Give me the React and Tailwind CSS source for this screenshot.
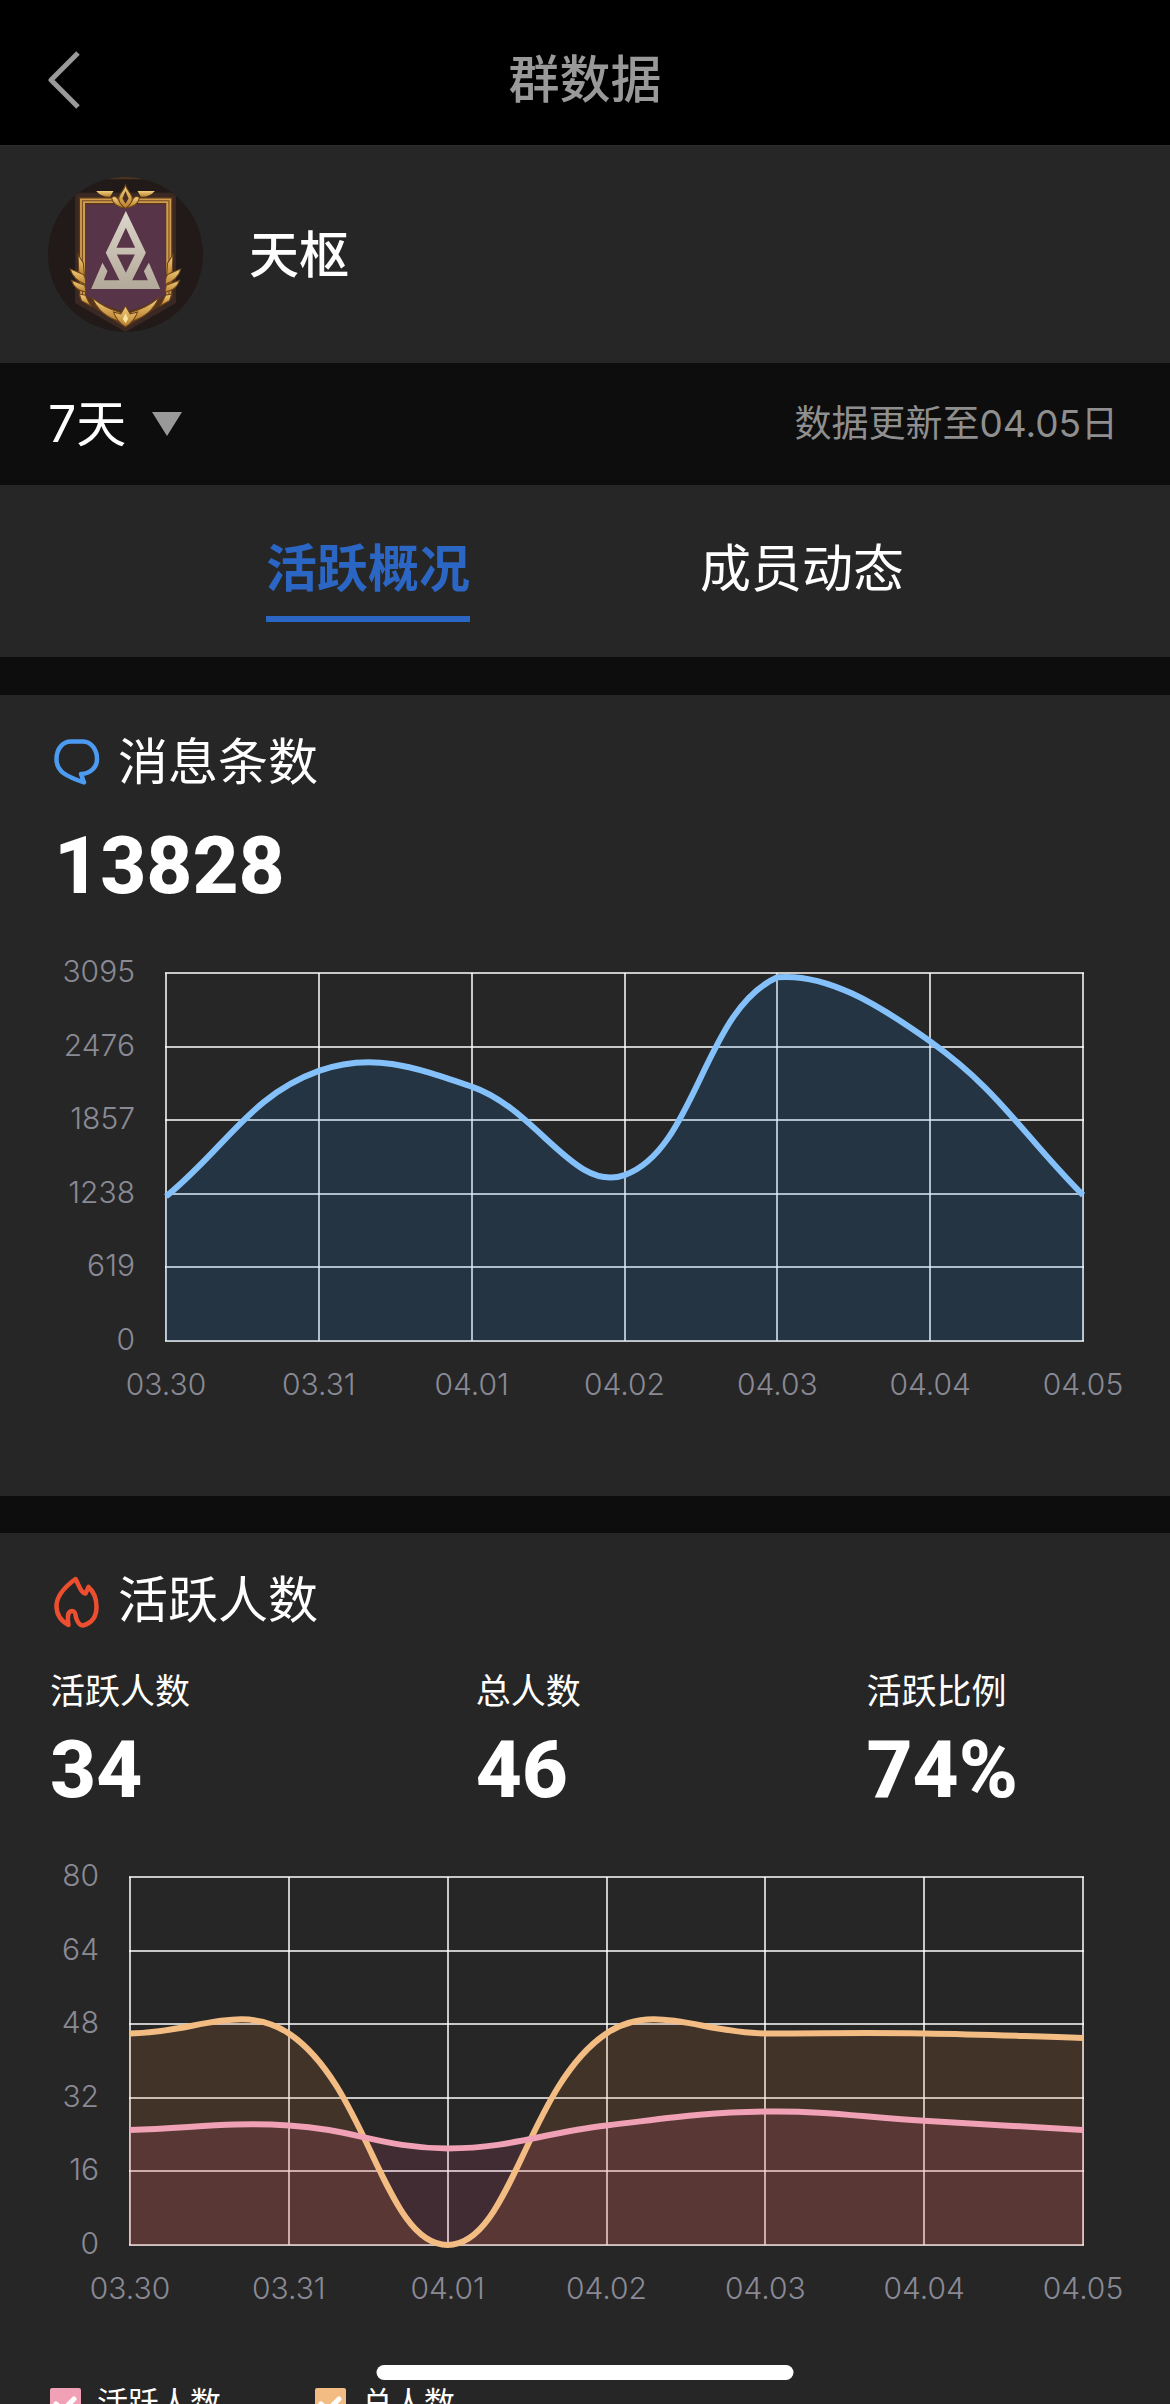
import React, { useState } from "react";

const DATES = ["03.30", "03.31", "04.01", "04.02", "04.03", "04.04", "04.05"];

const messageSeries = [
  {
    name: "消息条数",
    data: [1215, 2272, 2140, 1395, 3059, 2520, 1227],
    stroke: "#84c1fb",
    fill: "rgba(31,131,231,0.15)",
  },
];

const memberSeries = [
  {
    name: "总人数",
    data: [46, 46, 0, 46, 46, 46, 45],
    stroke: "#f3bc82",
    fill: "rgba(231,125,51,0.15)",
  },
  {
    name: "活跃人数",
    data: [25, 26, 21, 26, 29, 27, 25],
    stroke: "#f0a1b5",
    fill: "rgba(218,78,118,0.15)",
  },
];

const TENSION = 0.4;

// smooth curve through the points, control points stay inside the plot area
const splinePath = (points, top, bottom) => {
  const clamp = (y) => Math.min(bottom, Math.max(top, y));
  const dist = (a, b) => Math.hypot(b.x - a.x, b.y - a.y);

  const controls = points.map((cur, i) => {
    const prev = points[i - 1] || cur;
    const next = points[i + 1] || cur;
    const d01 = dist(prev, cur);
    const d12 = dist(cur, next);
    const fa = (TENSION * d01) / (d01 + d12);
    const fb = (TENSION * d12) / (d01 + d12);
    return {
      inX: cur.x - fa * (next.x - prev.x),
      inY: clamp(cur.y - fa * (next.y - prev.y)),
      outX: cur.x + fb * (next.x - prev.x),
      outY: clamp(cur.y + fb * (next.y - prev.y)),
    };
  });

  return points.reduce((path, p, i) => {
    if (i === 0) return `M${p.x} ${p.y}`;
    const a = controls[i - 1];
    const b = controls[i];
    return `${path}C${a.outX} ${a.outY} ${b.inX} ${b.inY} ${p.x} ${p.y}`;
  }, "");
};

const LineChart = ({ label, left, max, series }) => {
  const right = 1083;
  const top = 24;
  const bottom = 392;
  const stepX = (right - left) / (DATES.length - 1);
  const stepY = (bottom - top) / 5;
  const xs = DATES.map((_, i) => left + stepX * i);
  const rows = [0, 1, 2, 3, 4, 5];

  const lines = series.map((s) => ({
    ...s,
    path: splinePath(
      s.data.map((v, i) => ({
        x: xs[i],
        y: bottom - (v / max) * (bottom - top),
      })),
      top,
      bottom
    ),
  }));

  return (
    <svg viewBox="0 0 1170 460" className="block w-full" role="img" aria-label={label}>
      <g stroke="#ffffff" strokeOpacity="0.75" strokeWidth="2">
        {rows.map((r) => (
          <line key={r} x1={left - 1} x2={right + 1} y1={Math.round(top + stepY * r)} y2={Math.round(top + stepY * r)} />
        ))}
        {xs.map((x) => (
          <line key={x} x1={Math.round(x)} x2={Math.round(x)} y1={top} y2={bottom} />
        ))}
      </g>
      {lines.map((s) => (
        <path key={s.name} d={`${s.path}L${right} ${bottom}L${left} ${bottom}Z`} fill={s.fill} />
      ))}
      {lines.map((s) => (
        <path key={s.name} d={s.path} fill="none" stroke={s.stroke} strokeWidth="6" />
      ))}
      <g fill="#8a8a95" fontSize="30" fontWeight="300">
        {rows.map((r) => (
          <text key={r} x={left - 31} y={top + stepY * r + 9} textAnchor="end">
            {max - (max / 5) * r}
          </text>
        ))}
        {DATES.map((d, i) => (
          <text key={d} x={xs[i]} y={bottom + 54} textAnchor="middle">
            {d}
          </text>
        ))}
      </g>
    </svg>
  );
};

const GroupAvatar = () => (
  <svg viewBox="54 48 464 464" className="size-[155px] shrink-0 rounded-full" role="img" aria-label="群头像">
    <defs>
      <linearGradient id="gold" x1="0" y1="0" x2="0" y2="1">
        <stop offset="0" stopColor="#f3cf7c" />
        <stop offset="1" stopColor="#b97f2e" />
      </linearGradient>
      <linearGradient id="silver" x1="0" y1="0" x2="0" y2="1">
        <stop offset="0" stopColor="#ddd6cb" />
        <stop offset="1" stopColor="#b3a99a" />
      </linearGradient>
    </defs>
    <rect x="54" y="48" width="464" height="464" fill="#221a19" />
    <path d="M215 48H360V55H215Z" fill="#4a3423" />
    <path d="M135 95H437V425L286 512L135 425Z" fill="#3a2822" />
    <path d="M146 108H427V408L380 440L286 500L192 440L146 408Z" fill="#57351d" />
    <path d="M150 112H423V405H408V126H165V405H150Z" fill="#cf9c4e" />
    <path d="M157 400V119H416V400" fill="none" stroke="#744820" strokeWidth="3" />
    <path d="M168 130H405V402C370 428 325 440 286 452C247 440 202 428 168 402Z" fill="#583448" />
    <path d="M198 90H250L240 107Q216 110 198 90Z" fill="url(#gold)" />
    <path d="M374 90H322L332 107Q356 110 374 90Z" fill="url(#gold)" />
    <g fill="url(#gold)" stroke="#6b4219" strokeWidth="3">
      <path d="M244 110Q258 100 266 118L284 140Q250 138 244 110Z" />
      <path d="M328 110Q314 100 306 118L288 140Q322 138 328 110Z" />
      <path d="M286 72C292 92 308 100 306 116C304 130 294 134 286 142C278 134 268 130 266 116C264 100 280 92 286 72Z" />
    </g>
    <path d="M286 90L295 112L286 128L277 112Z" fill="#4b2d20" />
    <path
      d="M183 383L217 305L232 330L221 357H268L227 275L287 150L347 275L306 357H353L341 330L356 305L390 383ZM287 200L259 260H315ZM260 280L287 335L314 280Z"
      fill="url(#silver)"
      fillRule="evenodd"
    />
    <g fill="url(#gold)" stroke="#6b4219" strokeWidth="3">
      <path d="M144 280L160 306L163 345L146 332Z" />
      <path d="M120 323L160 340Q168 352 166 370Q130 356 120 323Z" />
      <path d="M124 357L164 372L168 393Q134 388 124 357Z" />
      <path d="M148 398L166 402L182 434L154 418Z" />
      <path d="M428 280L412 306L409 345L426 332Z" />
      <path d="M452 323L412 340Q404 352 406 370Q442 356 452 323Z" />
      <path d="M448 357L408 372L404 393Q438 388 448 357Z" />
      <path d="M424 398L406 402L390 434L418 418Z" />
      <path d="M187 410Q222 440 272 454L262 478Q208 460 187 410Z" />
      <path d="M385 410Q350 440 300 454L310 478Q364 460 385 410Z" />
      <path d="M286 434L300 458L322 452Q312 482 286 496Q260 482 250 452L272 458Z" />
    </g>
    <path d="M286 456L294 472L286 486L278 472Z" fill="#fbe3a0" />
  </svg>
);

const MessageIcon = () => (
  <svg viewBox="0 0 50 54" className="h-[54px] w-[50px]" fill="none" stroke="#4c9bf0" strokeWidth="4.5" strokeLinejoin="round" aria-hidden="true">
    <path d="M21 6.500H33C41 6.500 47 14.500 47 24C47 33 40 38.500 31 39L34 47.500C24 44 19 42 14 38.500C9 35 6.500 31 6.500 24C6.500 14 12.500 6.500 21 6.500Z" />
  </svg>
);

const FlameIcon = () => (
  <svg viewBox="0 0 50 54" className="h-[54px] w-[50px] overflow-visible" fill="none" stroke="#ec4f30" strokeWidth="4.5" strokeLinejoin="round" aria-hidden="true">
    <path d="M25.500 6C16 13 6.500 22 6.500 33C6.500 42 11 48 18.500 52C17.500 46 17 38 22 38C26.500 38 25 43 26.500 46C28 50 30 52.500 33 52.500C42 50 46.500 43 46.500 34C46.500 26 44 19 38.500 14L35.500 20.500C31 20.500 29 12 25.500 6Z" />
  </svg>
);

const CardTitle = ({ icon, children }) => (
  <div className="flex items-center gap-[18px] px-[50px]">
    {icon}
    <h2 className="text-[50px] leading-[64px]">{children}</h2>
  </div>
);

const Stat = ({ label, value }) => (
  <div>
    <dt className="text-[35px] leading-[48px]">{label}</dt>
    <dd className="font-[Roboto] text-[80px] leading-[110px] font-extrabold">{value}</dd>
  </div>
);

const LegendItem = ({ label, checked, onChange, boxClass }) => (
  <label className="flex items-center gap-4 text-[31px] leading-[40px]">
    <span className="relative size-[31px]">
      <input type="checkbox" checked={checked} onChange={onChange} className={`block size-[31px] appearance-none rounded-xs ${boxClass}`} />
      {checked && (
        <svg viewBox="0 0 31 31" className="pointer-events-none absolute inset-0" fill="none" stroke="#fff" strokeWidth="5" strokeLinecap="round" strokeLinejoin="round" aria-hidden="true">
          <path d="M6 16L13 22L24 11" />
        </svg>
      )}
    </span>
    {label}
  </label>
);

const App = () => {
  const [range, setRange] = useState("7");
  const [tab, setTab] = useState("overview");
  const [visible, setVisible] = useState({ 活跃人数: true, 总人数: true });

  const toggle = (name) =>
    setVisible((prev) => ({ ...prev, [name]: !prev[name] }));

  const tabs = [
    { id: "overview", name: "活跃概况" },
    { id: "members", name: "成员动态" },
  ];

  return (
    <div className="relative flex h-screen flex-col overflow-hidden bg-[#0d0d0d] font-[Inter,'Noto_Sans_CJK_SC',sans-serif] text-white">
      <header className="grid shrink-0 grid-cols-[1fr_auto_1fr] items-center border-b border-[#2e2e2e] bg-black px-12 pt-12 pb-[33px] text-[#999999]">
        <button type="button" aria-label="返回" className="justify-self-start">
          <svg viewBox="0 0 34 58" className="h-[58px] w-[34px]" fill="none" stroke="currentColor" strokeWidth="5" strokeLinejoin="round" aria-hidden="true">
            <path d="M30 2L3 29L30 56" />
          </svg>
        </button>
        <h1 className="text-[51px] leading-[64px] font-medium">群数据</h1>
      </header>

      <main className="min-h-0 flex-1 overflow-hidden">
        <section className="flex items-center gap-[46px] bg-[#262626] px-12 py-[31px]">
          <GroupAvatar />
          <p className="text-[50px] leading-[64px] font-medium">天枢</p>
        </section>

        <section className="flex items-center justify-between px-12 py-[29px]">
          <div className="flex items-center gap-6">
            <select
              aria-label="时间范围"
              value={range}
              onChange={(e) => setRange(e.target.value)}
              className="w-20 appearance-none bg-transparent text-[50px] leading-[64px]"
            >
              <option value="7">7天</option>
              <option value="30">30天</option>
            </select>
            <svg viewBox="0 0 30 24" className="h-6 w-[30px]" fill="#999999" aria-hidden="true">
              <path d="M0 0H30L15 24Z" />
            </svg>
          </div>
          <p className="pr-1 text-[37px] leading-[48px] text-[#8f8f8f]">
            数据更新至04.05日
          </p>
        </section>

        <nav className="flex justify-center gap-[230px] bg-[#262626] pt-[52px] pb-[35px]">
          {tabs.map((t) => (
            <button
              key={t.id}
              type="button"
              onClick={() => setTab(t.id)}
              className={`border-b-6 pb-[15px] text-[51px] leading-[64px] ${
                tab === t.id
                  ? "border-[#2b66c4] font-bold text-[#2b66c4]"
                  : "border-transparent font-normal"
              }`}
            >
              {t.name}
            </button>
          ))}
        </nav>

        <section className="mt-[38px] bg-[#262626] pt-[35px] pb-[87px]">
          <CardTitle icon={<MessageIcon />}>消息条数</CardTitle>
          <p className="mt-[18px] mb-[29px] px-[54px] font-[Roboto] text-[80px] leading-[108px] font-extrabold">
            13828
          </p>
          <LineChart label="消息条数" left={166} max={3095} series={messageSeries} />
        </section>

        <section className="mt-[37px] bg-[#262626] pt-[35px] pb-16">
          <CardTitle icon={<FlameIcon />}>活跃人数</CardTitle>
          <dl className="mt-[35px] flex justify-between pr-[152px] pl-[50px]">
            <Stat label="活跃人数" value="34" />
            <Stat label="总人数" value="46" />
            <Stat label="活跃比例" value="74%" />
          </dl>
          <div className="mt-[28px]">
            <LineChart
              label="活跃人数"
              left={130}
              max={80}
              series={memberSeries.filter((s) => visible[s.name])}
            />
          </div>
          <div className="mt-[70px] flex gap-[94px] px-[50px]">
            <LegendItem
              label="活跃人数"
              checked={visible["活跃人数"]}
              onChange={() => toggle("活跃人数")}
              boxClass="bg-[#f0a1b5]"
            />
            <LegendItem
              label="总人数"
              checked={visible["总人数"]}
              onChange={() => toggle("总人数")}
              boxClass="bg-[#f3bc82]"
            />
          </div>
        </section>
      </main>

      <div className="absolute bottom-6 left-1/2 h-[15px] w-[417px] -translate-x-1/2 rounded-full bg-white" />
    </div>
  );
};

export default App;
